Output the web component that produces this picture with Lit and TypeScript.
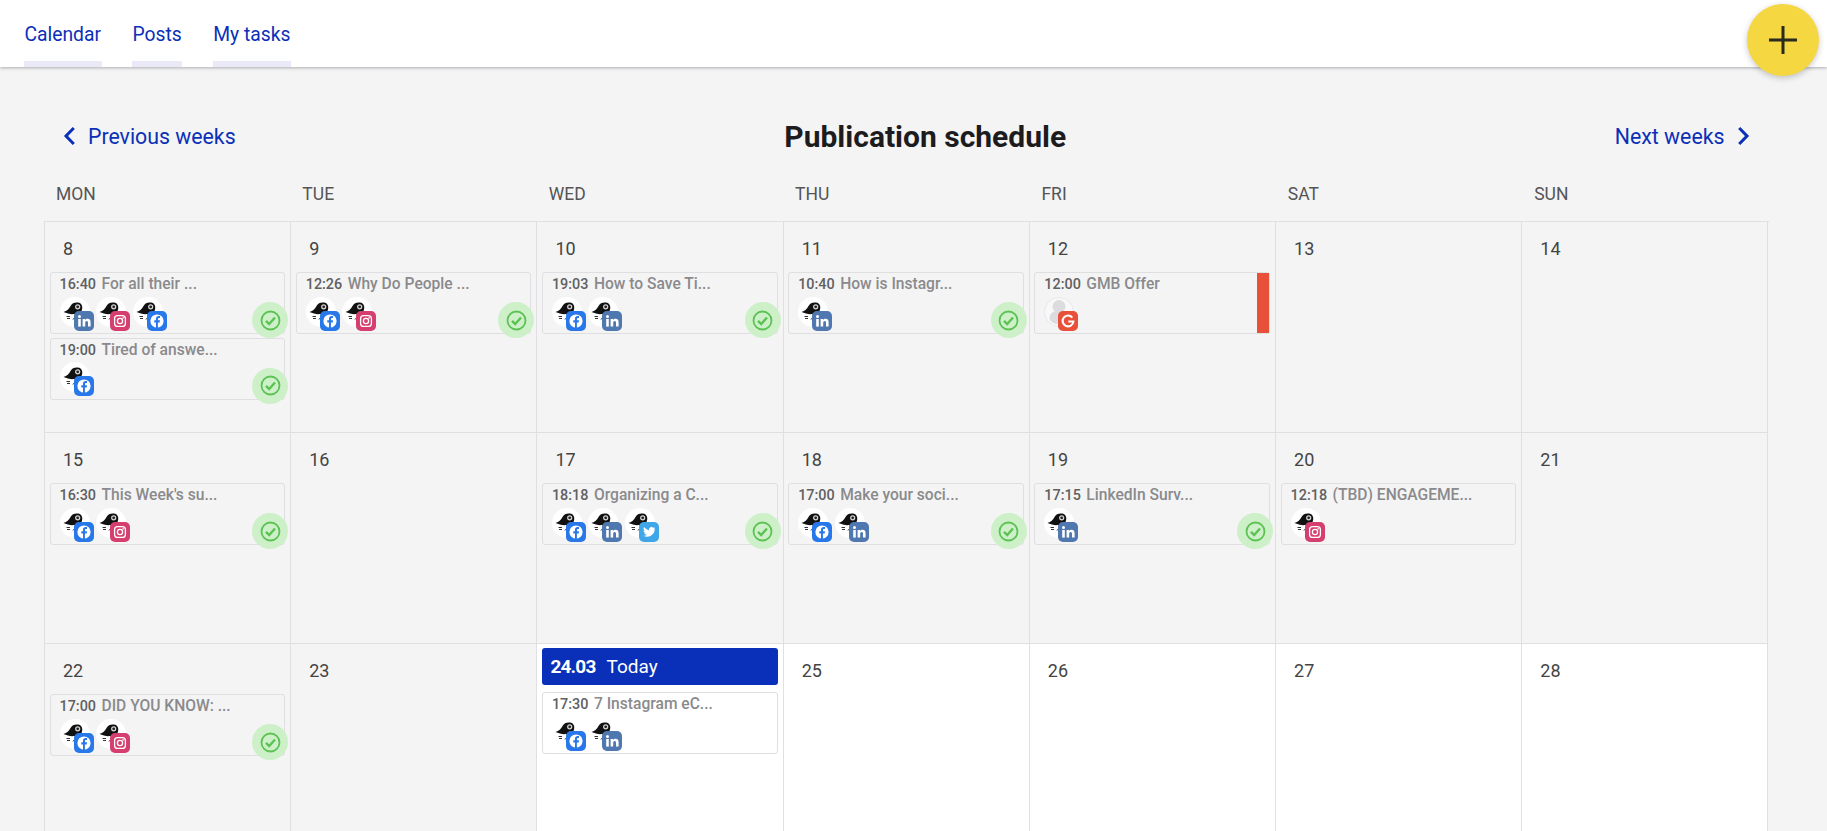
import { LitElement, html, css, svg } from "lit";
import { customElement } from "lit/decorators.js";

type Net = "fb" | "in" | "ig" | "tw" | "g";
interface Post { time: string; title: string; nets: Net[]; done?: boolean; alert?: boolean; }
interface Day { n: string; posts: Post[]; today?: boolean; future?: boolean; }

const bird = svg`<svg class="av" viewBox="0 0 30 30"><circle cx="15" cy="15" r="15" fill="#fff"/>
<path d="M3.500 15 C7 14 9 12 10.500 9 C12 6 15 5 18 5.500 C21.500 6 23 9 22 12.500 C21.500 15 20 17 17 18.500 L14 17 C11 17.500 7 16.500 3.500 15 Z" fill="#111"/>
<circle cx="17.700" cy="9.800" r="2.600" fill="#d8d8d8"/><circle cx="17.700" cy="9.800" r="1.400" fill="#222"/>
<path d="M6.500 19.500h3.500M7 21.500h3M13 22.500l2-2.500" stroke="#333" stroke-width="1" fill="none"/></svg>`;

const ghost = svg`<svg class="av" viewBox="0 0 30 30"><circle cx="15" cy="15" r="14.500" fill="#f8f8f9" stroke="#e8e8ea"/>
<circle cx="15" cy="9.500" r="6.500" fill="#dcdcde"/><ellipse cx="13" cy="20.500" rx="7.500" ry="6.500" fill="#dcdcde"/></svg>`;

const badges: Record<Net, unknown> = {
  fb: svg`<svg class="bd" viewBox="0 0 20 20"><rect width="20" height="20" rx="5" fill="#2878ea"/><circle cx="10" cy="10" r="6.600" fill="#fff"/><path d="M9 17v-5.600H7.300V9.200H9V7.700c0-1.800 1-2.700 2.600-2.700l1.400.1v1.900h-.9c-.8 0-1.100.4-1.100 1.100v1.100H13l-.3 2.200h-1.800V17Z" fill="#2878ea"/></svg>`,
  in: svg`<svg class="bd" viewBox="0 0 20 20"><rect width="20" height="20" rx="5" fill="#4f77b0"/><rect x="4.200" y="8" width="2.600" height="7.600" fill="#fff"/><circle cx="5.500" cy="5.600" r="1.500" fill="#fff"/><path d="M8.600 8h2.500v1.100c.5-.8 1.400-1.300 2.500-1.300 2.200 0 3 1.400 3 3.600v4.200H14v-3.800c0-1-.3-1.800-1.300-1.800s-1.500.8-1.500 1.800v3.800H8.600Z" fill="#fff"/></svg>`,
  ig: svg`<svg class="bd" viewBox="0 0 20 20"><rect width="20" height="20" rx="5" fill="#d43f6f"/><rect x="4.600" y="4.600" width="10.800" height="10.800" rx="3" fill="none" stroke="#fff" stroke-width="1.300"/><circle cx="10" cy="10" r="2.600" fill="none" stroke="#fff" stroke-width="1.300"/><circle cx="13.100" cy="6.900" r=".8" fill="#fff"/></svg>`,
  tw: svg`<svg class="bd" viewBox="0 0 20 20"><rect width="20" height="20" rx="5" fill="#3fa6e8"/><path d="M16.500 6.200c-.5.2-1 .4-1.500.4.5-.3 1-.8 1.200-1.400-.5.3-1.100.5-1.700.6a2.700 2.700 0 0 0-4.600 2.400C8.200 7.700 6.200 6.700 4.900 5.100c-.7 1.200-.4 2.800.8 3.600-.4 0-.8-.1-1.200-.3 0 1.300.9 2.400 2.100 2.700-.4.100-.8.100-1.200 0 .3 1.100 1.300 1.800 2.500 1.900A5.400 5.400 0 0 1 4 13.500 7.600 7.600 0 0 0 15.700 6.800c.3-.2.600-.4.800-.6Z" fill="#fff"/></svg>`,
  g: svg`<svg class="bd" viewBox="0 0 20 20"><rect width="20" height="20" rx="5" fill="#e8503a"/><path d="M14.300 6.600A5.400 5.400 0 1 0 15.400 10.500H10.300" fill="none" stroke="#fff" stroke-width="2.100"/></svg>`,
};

const p = (time: string, title: string, nets: Net[], done = true, alert = false): Post => ({ time, title, nets, done, alert });

const days: Day[] = [
  { n: "8", posts: [p("16:40", "For all their ...", ["in", "ig", "fb"]), p("19:00", "Tired of answe...", ["fb"])] },
  { n: "9", posts: [p("12:26", "Why Do People ...", ["fb", "ig"])] },
  { n: "10", posts: [p("19:03", "How to Save Ti...", ["fb", "in"])] },
  { n: "11", posts: [p("10:40", "How is Instagr...", ["in"])] },
  { n: "12", posts: [p("12:00", "GMB Offer", ["g"], false, true)] },
  { n: "13", posts: [] },
  { n: "14", posts: [] },
  { n: "15", posts: [p("16:30", "This Week's su...", ["fb", "ig"])] },
  { n: "16", posts: [] },
  { n: "17", posts: [p("18:18", "Organizing a C...", ["fb", "in", "tw"])] },
  { n: "18", posts: [p("17:00", "Make your soci...", ["fb", "in"])] },
  { n: "19", posts: [p("17:15", "LinkedIn Surv...", ["in"])] },
  { n: "20", posts: [p("12:18", "(TBD) ENGAGEME...", ["ig"], false)] },
  { n: "21", posts: [] },
  { n: "22", posts: [p("17:00", "DID YOU KNOW: ...", ["fb", "ig"])] },
  { n: "23", posts: [] },
  { n: "24.03", today: true, future: true, posts: [p("17:30", "7 Instagram eC...", ["fb", "in"], false)] },
  { n: "25", future: true, posts: [] },
  { n: "26", future: true, posts: [] },
  { n: "27", future: true, posts: [] },
  { n: "28", future: true, posts: [] },
];

@customElement("app-root")
export class AppRoot extends LitElement {
  static styles = css`
    :host { display: block; height: 831px; overflow: hidden; position: relative; background: #f4f4f5; font-family: Roboto, sans-serif; color: #222; }
    header { height: 67px; background: #fff; display: flex; gap: 30.500px; padding-left: 24px; box-shadow: 0 1px 3px rgba(60,60,70,.38); position: relative; box-sizing: border-box; }
    .tab { color: #0a2fb8; font-size: 19.300px; line-height: 20px; padding: 25px .5px 0; height: 67px; box-sizing: border-box; position: relative; }
    .tab::after { content: ""; position: absolute; left: 0; right: 0; bottom: 0; height: 6px; background: #e9e9f8; }
    .fab { position: absolute; left: 1747px; top: 3.500px; width: 72px; height: 72px; border-radius: 50%; background: #f5d742; box-shadow: 0 2px 6px rgba(0,0,0,.22); display: flex; align-items: center; justify-content: center; }
    .fab svg { width: 28px; height: 28px; }
    main { padding: 0 58.500px 0 44px; }
    .nav { display: flex; justify-content: space-between; align-items: center; padding: 0 19px 0 19px; height: 34px; margin-top: 52px; }
    .nav a { color: #0a2fb8; font-size: 21.300px; display: flex; align-items: center; gap: 12px; }
    .nav svg { width: 13px; height: 20px; }
    h1 { margin: 0; font-size: 30px; font-weight: 700; color: #1c1c1e; }
    .dow { display: grid; grid-template-columns: repeat(7, 1fr); margin-top: 23px; height: 36px; align-items: center; }
    .dow span { padding-left: 12px; font-size: 17.500px; color: #555; }
    .grid { display: grid; grid-template-columns: repeat(7, 1fr); grid-auto-rows: 211px; border-top: 1px solid #e0e0e3; border-left: 1px solid #e0e0e3; margin-top: 9px; }
    .cell { border-right: 1px solid #e0e0e3; border-bottom: 1px solid #e0e0e3; padding: 0 5px 0 4.500px; display: flex; flex-direction: column; gap: 3.500px; min-width: 0; }
    .cell.future { background: #fff; }
    .num { font-size: 18px; color: #444; height: 46.500px; padding: 15px 0 0 13.500px; box-sizing: border-box; line-height: 24px; }
    .today { height: 37px; margin: 4px 0 3.500px; background: #0a2fb8; border-radius: 3px; color: #fff; font-size: 19px; display: flex; align-items: center; padding-left: 8.500px; gap: 11px; }
    .today b { font-weight: 700; letter-spacing: -.8px; }
    .card { position: relative; height: 62px; box-sizing: border-box; border: 1px solid #dfdfe2; border-radius: 3px; padding: 1px 9px 0; }
    .line { display: flex; gap: 5.500px; align-items: baseline; line-height: 20px; }
    .time { font-size: 14.400px; font-weight: 500; color: #606060; }
    .title { font-size: 15.600px; font-weight: 500; color: #8a8a8c; white-space: nowrap; }
    .icons { display: flex; gap: 6.500px; margin-top: 1.500px; }
    .icon { position: relative; width: 30px; height: 30px; }
    .av { display: block; width: 30px; height: 30px; }
    .bd { position: absolute; left: 14px; top: 14px; width: 20px; height: 20px; }
    .check { position: absolute; right: -4px; bottom: -5px; width: 36px; height: 36px; border-radius: 50%; background: #cdf0c9; display: flex; align-items: center; justify-content: center; }
    .check svg { width: 21px; height: 21px; }
    .bar { position: absolute; right: 0; top: 0; bottom: 0; width: 12px; background: #e8503a; }
  `;

  private card(c: Post) {
    return html`<div class="card">
      <div class="line"><span class="time">${c.time}</span><span class="title">${c.title}</span></div>
      <div class="icons">${c.nets.map((n) => html`<div class="icon">${n === "g" ? ghost : bird}${badges[n]}</div>`)}</div>
      ${c.done ? html`<div class="check"><svg viewBox="0 0 21 21" fill="none" stroke="#5cc254" stroke-width="1.800"><circle cx="10.500" cy="10.500" r="9"/><path d="M6 10.800l3.200 3.200 5.800-6.500" stroke-width="2.400"/></svg></div>` : ""}
      ${c.alert ? html`<div class="bar"></div>` : ""}
    </div>`;
  }

  render() {
    return html`
      <header>
        <div class="tab">Calendar</div><div class="tab">Posts</div><div class="tab">My tasks</div>
      </header>
      <div class="fab"><svg viewBox="0 0 28 28" stroke="#2a2a1e" stroke-width="3"><path d="M0 14h28M14 0v28"/></svg></div>
      <main>
        <div class="nav">
          <a><svg viewBox="0 0 13 20" fill="none" stroke="#0a2fb8" stroke-width="3"><path d="M10.800 2 3 10l7.800 8"/></svg>Previous weeks</a>
          <h1>Publication schedule</h1>
          <a>Next weeks<svg viewBox="0 0 13 20" fill="none" stroke="#0a2fb8" stroke-width="3"><path d="M2.200 2 10 10l-7.800 8"/></svg></a>
        </div>
        <div class="dow">${["MON","TUE","WED","THU","FRI","SAT","SUN"].map((d) => html`<span>${d}</span>`)}</div>
        <div class="grid">
          ${days.map((d) => html`<div class="cell ${d.future ? "future" : ""}">
            ${d.today ? html`<div class="today"><b>${d.n}</b><span>Today</span></div>` : html`<div class="num">${d.n}</div>`}
            ${d.posts.map((c) => this.card(c))}
          </div>`)}
        </div>
      </main>`;
  }
}
